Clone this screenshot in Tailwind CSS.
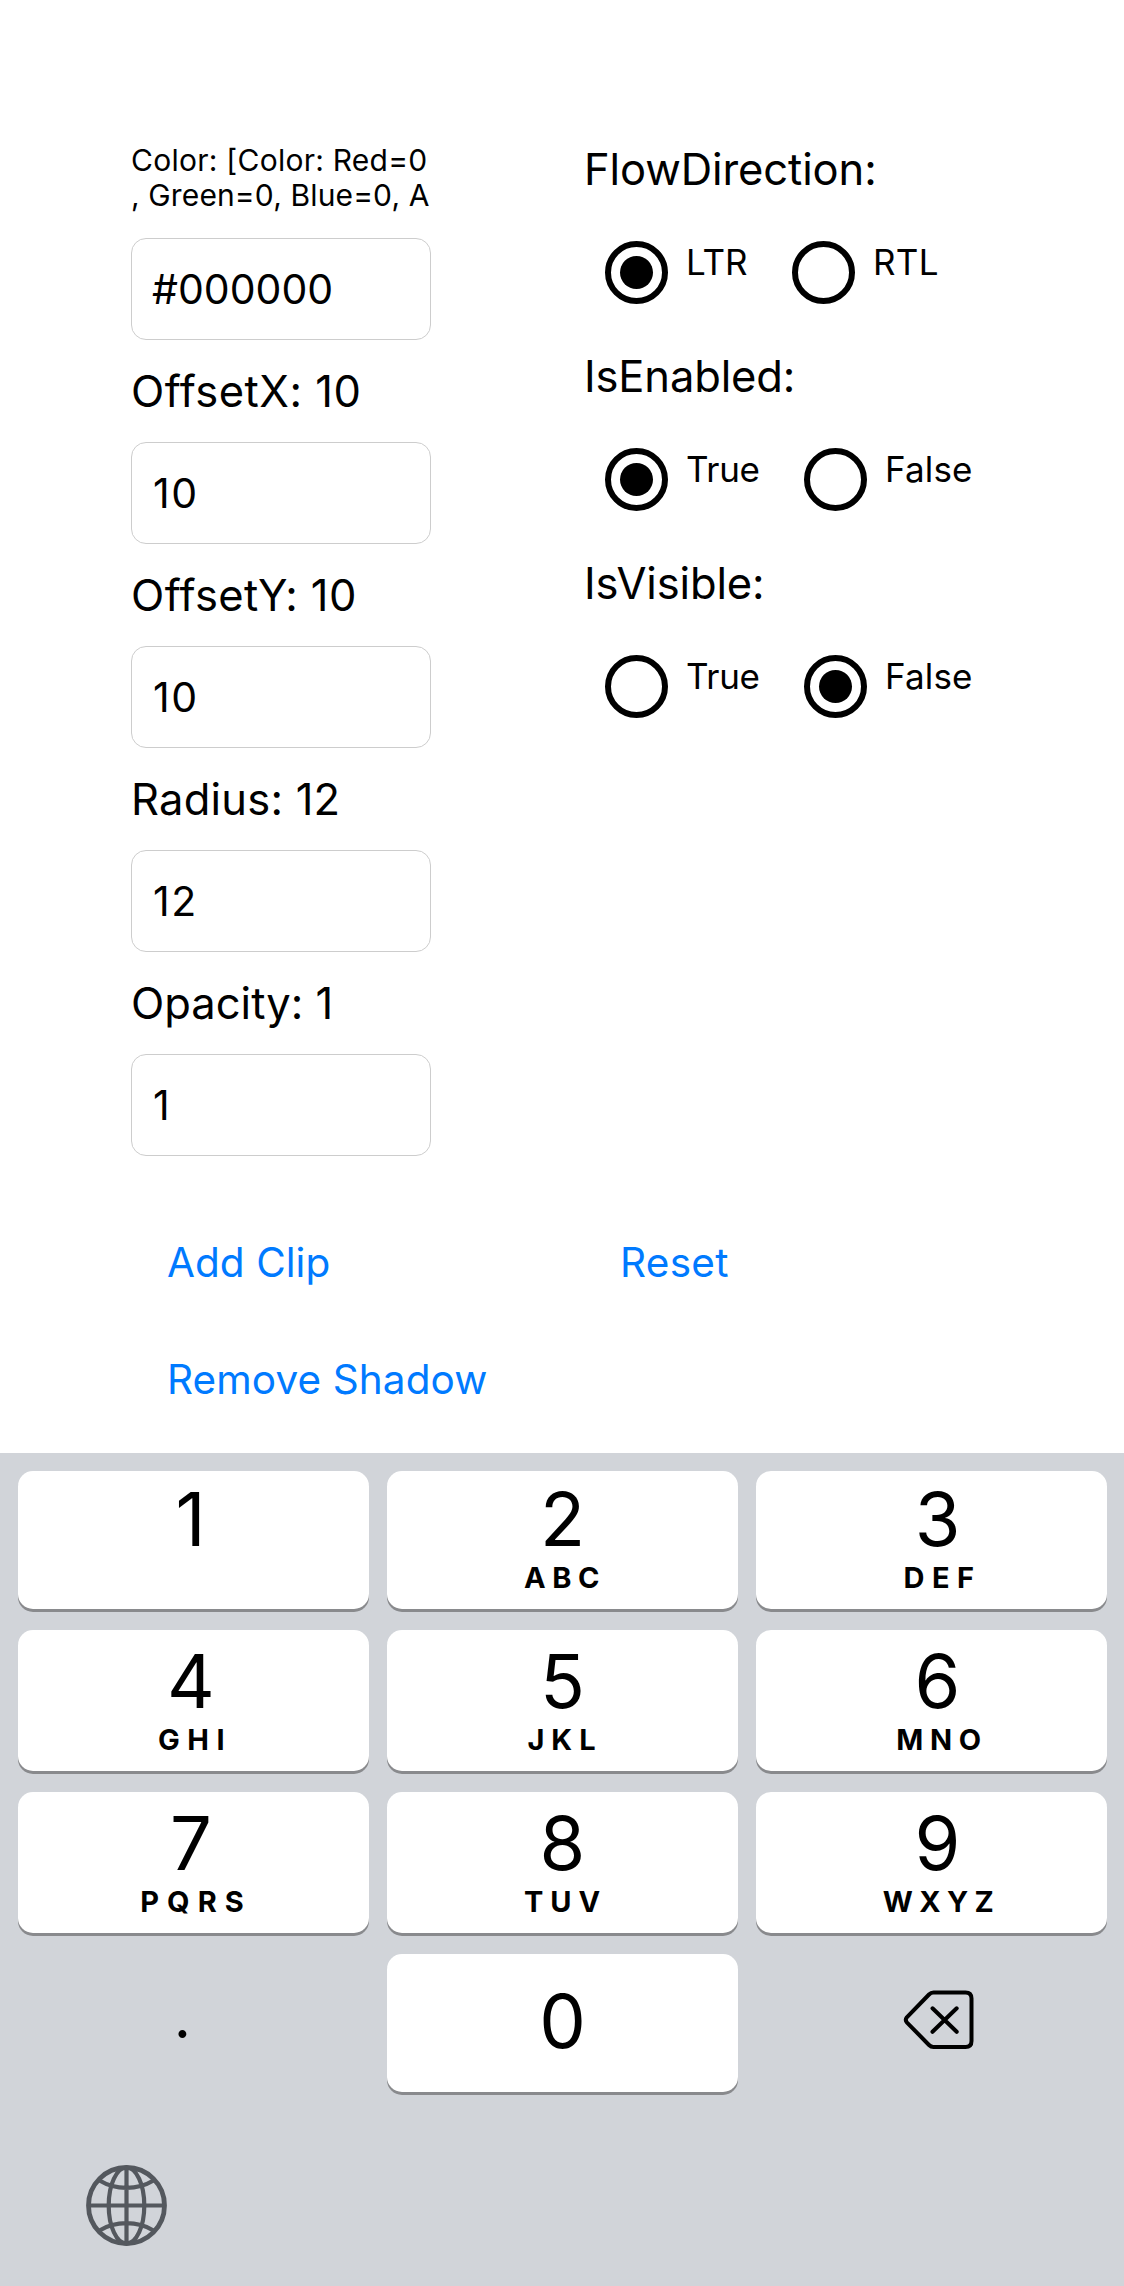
<!DOCTYPE html>
<html lang="en">
<head>
<meta charset="utf-8">
<title>Shadow options</title>
<script src="https://cdn.jsdelivr.net/npm/@tailwindcss/browser@4"></script>
</head>
<body class="flex h-[2286px] w-[1124px] flex-col overflow-hidden bg-white font-['Inter',sans-serif] text-black">
<main class="h-[1453px] pt-[136px]">
  <div class="flex h-[1020px] pl-[131px]">
    <section class="w-[300px]">
      <div class="h-[102px] pt-[7px] text-[30px] leading-[35px] whitespace-nowrap">
        <div class="tracking-[0.25px]">Color: [Color: Red=0</div>
        <div class="tracking-[0.13px]">, Green=0, Blue=0, A</div>
      </div>
      <div class="flex h-[102px] items-center rounded-[15px] border border-[#cdcdcd] pt-[2px] pl-[20px] text-[41px]">#000000</div>
      <div class="h-[102px] text-[43.5px] leading-[102px] tracking-[0.5px] whitespace-nowrap">OffsetX: 10</div>
      <div class="flex h-[102px] items-center rounded-[15px] border border-[#cdcdcd] pt-[2px] pl-[21px] text-[41px] tracking-[1.5px]">10</div>
      <div class="h-[102px] text-[43.5px] leading-[102px] tracking-[0.4px] whitespace-nowrap">OffsetY: 10</div>
      <div class="flex h-[102px] items-center rounded-[15px] border border-[#cdcdcd] pt-[2px] pl-[21px] text-[41px] tracking-[1.5px]">10</div>
      <div class="h-[102px] text-[43.5px] leading-[102px] tracking-[0.23px] whitespace-nowrap">Radius: 12</div>
      <div class="flex h-[102px] items-center rounded-[15px] border border-[#cdcdcd] pt-[2px] pl-[21px] text-[41px] tracking-[1.5px]">12</div>
      <div class="h-[102px] text-[43.5px] leading-[102px] whitespace-nowrap">Opacity: 1</div>
      <div class="flex h-[102px] items-center rounded-[15px] border border-[#cdcdcd] pt-[2px] pl-[21px] text-[41px]">1</div>
    </section>

    <section class="ml-[153px]">
      <div class="h-[207px]">
        <div class="h-[68px] text-[43.5px] leading-[67px] tracking-[-0.1px]">FlowDirection:</div>
        <div class="flex pt-[37px] pl-[21px] text-[35px] leading-[42px]">
          <div class="flex w-[187px] gap-[18px]">
            <span class="flex size-[63px] items-center justify-center rounded-full border-6 border-black"><span class="size-[33px] rounded-full bg-black"></span></span>
            <span>LTR</span>
          </div>
          <div class="flex gap-[18px]">
            <span class="size-[63px] rounded-full border-6 border-black"></span>
            <span class="tracking-[0.29px]">RTL</span>
          </div>
        </div>
      </div>
      <div class="h-[207px]">
        <div class="h-[68px] text-[43.5px] leading-[67px] tracking-[-0.15px]">IsEnabled:</div>
        <div class="flex pt-[37px] pl-[21px] text-[35px] leading-[42px]">
          <div class="flex w-[199px] gap-[18px]">
            <span class="flex size-[63px] items-center justify-center rounded-full border-6 border-black"><span class="size-[33px] rounded-full bg-black"></span></span>
            <span class="tracking-[-0.3px]">True</span>
          </div>
          <div class="flex gap-[18px]">
            <span class="size-[63px] rounded-full border-6 border-black"></span>
            <span class="tracking-[0.15px]">False</span>
          </div>
        </div>
      </div>
      <div class="h-[207px]">
        <div class="h-[68px] text-[43.5px] leading-[67px] tracking-[-0.13px]">IsVisible:</div>
        <div class="flex pt-[37px] pl-[21px] text-[35px] leading-[42px]">
          <div class="flex w-[199px] gap-[18px]">
            <span class="size-[63px] rounded-full border-6 border-black"></span>
            <span class="tracking-[-0.3px]">True</span>
          </div>
          <div class="flex gap-[18px]">
            <span class="flex size-[63px] items-center justify-center rounded-full border-6 border-black"><span class="size-[33px] rounded-full bg-black"></span></span>
            <span class="tracking-[0.15px]">False</span>
          </div>
        </div>
      </div>
    </section>
  </div>

  <div class="mt-[49px] grid grid-cols-[452px_1fr] grid-rows-[117px_117px] items-center pl-[167px] text-[40.5px] text-[#007aff]">
    <span class="tracking-[0.05px]">Add Clip</span>
    <span class="pl-[1px] tracking-[0.3px]">Reset</span>
    <span class="tracking-[0.1px]">Remove Shadow</span>
  </div>
</main>

<footer class="h-[833px] bg-[#d1d4d9] pt-[18px] pr-[17px] pl-[18px]">
  <div class="grid grid-cols-3 grid-rows-[138px_141px_141px_138px] gap-x-[18px] gap-y-[21px] text-center text-[74px] leading-[60px]">
    <div class="rounded-[15px] bg-white pt-[18px] pr-[6px] shadow-[0_3px_0_#898a8d]">1</div>
    <div class="rounded-[15px] bg-white pt-[18px] shadow-[0_3px_0_#898a8d]">2<div class="mt-[14px] -mr-[5px] text-[29px] leading-[30px] font-bold tracking-[6.6px]">ABC</div></div>
    <div class="rounded-[15px] bg-white pt-[18px] pl-[12px] shadow-[0_3px_0_#898a8d]">3<div class="mt-[14px] -mr-[10px] text-[29px] leading-[30px] font-bold tracking-[7.4px]">DEF</div></div>

    <div class="rounded-[15px] bg-white pt-[21px] pr-[5px] shadow-[0_3px_0_#898a8d]">4<div class="mt-[14px] -mr-[8px] text-[29px] leading-[30px] font-bold tracking-[7.5px]">GHI</div></div>
    <div class="rounded-[15px] bg-white pt-[21px] shadow-[0_3px_0_#898a8d]">5<div class="mt-[14px] -mr-[5px] text-[29px] leading-[30px] font-bold tracking-[7px]">JKL</div></div>
    <div class="rounded-[15px] bg-white pt-[21px] pl-[12px] shadow-[0_3px_0_#898a8d]">6<div class="mt-[14px] -mr-[9px] text-[29px] leading-[30px] font-bold tracking-[6.6px]">MNO</div></div>

    <div class="rounded-[15px] bg-white pt-[21px] pr-[5px] shadow-[0_3px_0_#898a8d]">7<div class="mt-[14px] -mr-[10px] text-[29px] leading-[30px] font-bold tracking-[8px]">PQRS</div></div>
    <div class="rounded-[15px] bg-white pt-[21px] shadow-[0_3px_0_#898a8d]">8<div class="mt-[14px] -mr-[6px] text-[29px] leading-[30px] font-bold tracking-[7px]">TUV</div></div>
    <div class="rounded-[15px] bg-white pt-[21px] pl-[12px] shadow-[0_3px_0_#898a8d]">9<div class="mt-[14px] -mr-[8px] text-[29px] leading-[30px] font-bold tracking-[6.4px]">WXYZ</div></div>

    <div class="pt-[32px] pr-[22px] text-[60px]">.</div>
    <div class="rounded-[15px] bg-white pt-[37px] shadow-[0_3px_0_#898a8d]">0</div>
    <div class="flex pt-[16px] pl-[134px]">
      <svg class="size-[100px]" viewBox="0 0 100 100" fill="none" stroke="#000" stroke-width="4" stroke-linecap="round" stroke-linejoin="round">
        <path d="M43.500 22.500H75.500Q81.500 22.500 81.500 28.500V71Q81.500 77 75.500 77H43.500Q41 77 39 75L16.800 52.300Q14.800 49.800 16.800 47.300L39 24.500Q41 22.500 43.500 22.500Z"/>
        <path d="M42.500 38.300L66.700 61.800M66.700 38.300L42.500 61.800"/>
      </svg>
    </div>
  </div>
  <div class="pt-[72px] pl-[67px]">
    <svg class="size-[83px]" viewBox="-41.500 -41.500 83 83" fill="none" stroke="#54585e" stroke-width="4.200">
      <circle r="38" stroke-width="4.800"/>
      <ellipse rx="17.800" ry="38"/>
      <path d="M0 -38V38M-38 0H38M-27 -25Q-15 -17.700 0 -17.700T27 -25M-27 25Q-15 17.700 0 17.700T27 25"/>
    </svg>
  </div>
</footer>
</body>
</html>
